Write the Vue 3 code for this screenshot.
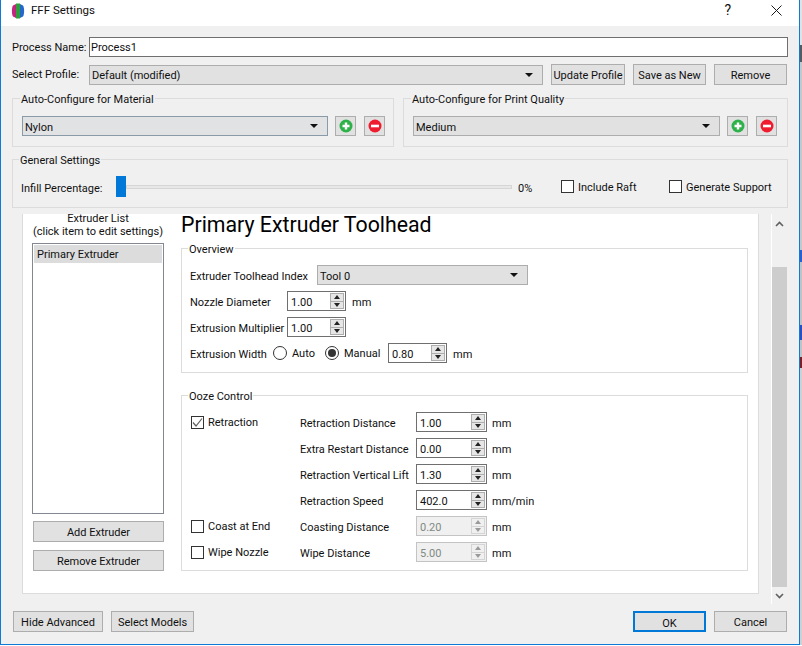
<template>
  <div class="screen">
    <div class="window">
      <!-- Title bar -->
      <header class="titlebar">
        <svg class="logo" width="16" height="16" viewBox="0 0 16 16">
          <path d="M3 2.500C1.500 5 1.500 11 3 13.500L6 15V1Z" fill="#c2267e" />
          <path d="M6 0.500H10V15.500H6Z" fill="#2f9e3f" />
          <path d="M10 1L13 2.500C14.500 5 14.500 11 13 13.500L10 15Z" fill="#2468c8" />
        </svg>
        <span class="title-text">FFF Settings</span>
        <span class="help">?</span>
        <svg class="close" width="11" height="11" viewBox="0 0 11 11">
          <path d="M0.500 0.500L10.500 10.500M10.500 0.500L0.500 10.500" stroke="#1a1a1a" fill="none" />
        </svg>
      </header>

      <div class="body">
        <div class="row name-row">
          <label class="top-label">Process Name:</label>
          <div class="text-input">Process1</div>
        </div>

        <div class="row profile-row">
          <label class="top-label">Select Profile:</label>
          <div class="combo profile-combo">
            <span>Default (modified)</span>
            <i class="caret"></i>
          </div>
          <button class="btn profile-btn update">Update Profile</button>
          <button class="btn profile-btn save">Save as New</button>
          <button class="btn profile-btn">Remove</button>
        </div>

        <div class="auto-row">
          <fieldset v-for="group in autoGroups" :key="group.title" class="group auto-group" :class="group.cls">
            <legend>{{ group.title }}</legend>
            <div class="combo-line">
              <div class="combo auto-combo" :class="{ hovered: group.hovered }">
                <span>{{ group.value }}</span>
                <i class="caret"></i>
              </div>
              <button class="icon-btn">
                <svg width="14" height="14" viewBox="0 0 14 14">
                  <circle cx="7" cy="7" r="6.500" fill="#2fb14a" />
                  <path d="M7 3.500V10.500M3.500 7H10.500" stroke="#fff" stroke-width="2.400" />
                </svg>
              </button>
              <button class="icon-btn">
                <svg width="14" height="14" viewBox="0 0 14 14">
                  <circle cx="7" cy="7" r="6.500" fill="#ee1c2e" />
                  <path d="M3 7H11" stroke="#fff" stroke-width="2.600" />
                </svg>
              </button>
            </div>
          </fieldset>
        </div>

        <fieldset class="group general">
          <legend>General Settings</legend>
          <div class="general-line">
            <span class="infill-label">Infill Percentage:</span>
            <div class="slider">
              <i class="slider-handle"></i>
              <i class="slider-track"></i>
            </div>
            <span class="percent">0%</span>
            <div class="check raft"><i class="box"></i><span>Include Raft</span></div>
            <div class="check support"><i class="box"></i><span>Generate Support</span></div>
          </div>
        </fieldset>

        <div class="scroll-row">
          <div class="panel">
            <!-- Extruder list column -->
            <div class="list-col">
              <div class="list-heading">Extruder List<br />(click item to edit settings)</div>
              <div class="list-box">
                <div class="list-item">Primary Extruder</div>
              </div>
              <button class="btn list-btn">Add Extruder</button>
              <button class="btn list-btn">Remove Extruder</button>
            </div>

            <!-- Settings column -->
            <div class="settings-col">
              <h1 class="heading">Primary Extruder Toolhead</h1>

              <fieldset class="group inner overview">
                <legend>Overview</legend>
                <div class="line">
                  <span class="w-index">Extruder Toolhead Index</span>
                  <div class="combo tool-combo">
                    <span>Tool 0</span>
                    <i class="caret"></i>
                  </div>
                </div>
                <div class="line">
                  <span class="w-field">Nozzle Diameter</span>
                  <div class="spin">
                    <span>1.00</span>
                    <div class="arrows"><i class="up"></i><i class="down"></i></div>
                  </div>
                  <span class="unit">mm</span>
                </div>
                <div class="line">
                  <span class="w-field">Extrusion Multiplier</span>
                  <div class="spin">
                    <span>1.00</span>
                    <div class="arrows"><i class="up"></i><i class="down"></i></div>
                  </div>
                </div>
                <div class="line width-line">
                  <span class="w-width">Extrusion Width</span>
                  <i class="radio"></i>
                  <span class="w-auto">Auto</span>
                  <i class="radio on"></i>
                  <span class="w-manual">Manual</span>
                  <div class="spin">
                    <span>0.80</span>
                    <div class="arrows"><i class="up"></i><i class="down"></i></div>
                  </div>
                  <span class="unit">mm</span>
                </div>
              </fieldset>

              <fieldset class="group inner ooze">
                <legend>Ooze Control</legend>
                <div class="ooze-grid">
                  <template v-for="item in oozeRows" :key="item.label">
                    <div class="check ooze-check">
                      <template v-if="item.check">
                        <i class="box">
                          <svg v-if="item.checked" width="11" height="11" viewBox="0 0 11 11">
                            <path d="M1 5.500L4 9L10 1.500" stroke="#5f5f5f" stroke-width="1.200" fill="none" />
                          </svg>
                        </i>{{ item.check }}
                      </template>
                    </div>
                    <span>{{ item.label }}</span>
                    <div class="spin wide" :class="{ disabled: item.disabled }">
                      <span>{{ item.value }}</span>
                      <div class="arrows"><i class="up"></i><i class="down"></i></div>
                    </div>
                    <span class="ooze-unit">{{ item.unit }}</span>
                  </template>
                </div>
              </fieldset>
            </div>
          </div>

          <!-- Scrollbar -->
          <div class="scrollbar">
            <svg class="sb-arrow" width="9" height="6" viewBox="0 0 9 6">
              <path d="M1 5L4.500 1.500L8 5" stroke="#606060" stroke-width="1.600" fill="none" />
            </svg>
            <div class="sb-thumb"></div>
            <svg class="sb-arrow" width="9" height="6" viewBox="0 0 9 6">
              <path d="M1 1L4.500 4.500L8 1" stroke="#606060" stroke-width="1.600" fill="none" />
            </svg>
          </div>
        </div>

        <footer class="footer">
          <button class="btn hide-btn">Hide Advanced</button>
          <button class="btn models-btn">Select Models</button>
          <button class="btn ok-btn">OK</button>
          <button class="btn cancel-btn">Cancel</button>
        </footer>
      </div>
    </div>
    <div class="desktop-edge"></div>
  </div>
</template>

<script setup>
const autoGroups = [
  { title: "Auto-Configure for Material", value: "Nylon", cls: "material", hovered: true },
  { title: "Auto-Configure for Print Quality", value: "Medium", cls: "quality", hovered: false },
];

const oozeRows = [
  { check: "Retraction", checked: true, label: "Retraction Distance", value: "1.00", unit: "mm" },
  { label: "Extra Restart Distance", value: "0.00", unit: "mm" },
  { label: "Retraction Vertical Lift", value: "1.30", unit: "mm" },
  { label: "Retraction Speed", value: "402.0", unit: "mm/min" },
  { check: "Coast at End", label: "Coasting Distance", value: "0.20", unit: "mm", disabled: true },
  { check: "Wipe Nozzle", label: "Wipe Distance", value: "5.00", unit: "mm", disabled: true },
];
</script>

<style>
html,
body {
  margin: 0;
  background: #fff;
}
</style>

<style scoped>
.screen {
  display: flex;
  width: 802px;
  height: 646px;
  overflow: hidden;
  font-family: Roboto, "Noto Sans", sans-serif;
  font-size: 11px;
  line-height: 17px;
  white-space: nowrap;
  color: #101010;
}

.window {
  box-sizing: border-box;
  width: 800px;
  height: 645px;
  border: solid #0f7ad8;
  border-width: 0 1px 1px 1px;
  background: #f0f0f0;
}

/* the desktop showing behind the dialog's right edge */
.desktop-edge {
  width: 2px;
  height: 645px;
  background: linear-gradient(
    #dfe3e6 0 45px,
    #555b60 45px 62px,
    #c4c8cb 62px 250px,
    #2a5fd0 250px 262px,
    #bfc3c6 262px 325px,
    #2a4fc0 325px 340px,
    #bfc3c6 340px 357px,
    #7a2028 357px 368px,
    #ced1d3 368px
  );
}

.titlebar {
  display: flex;
  align-items: center;
  box-sizing: border-box;
  height: 26px;
  background: #fff;
  padding: 0 0 5px 9px;
  font-size: 11.500px;
}

.logo {
  margin-right: 5px;
}

.title-text {
  flex: 1;
}

.help {
  margin-right: 40px;
  font-size: 14px;
}

.close {
  margin-right: 17px;
}

.body {
  padding: 11px 11px 0;
}

.row {
  display: flex;
  align-items: center;
}

.name-row {
  height: 20px;
  margin-bottom: 7px;
}

.profile-row {
  height: 21px;
  margin-bottom: 6px;
}

.top-label {
  width: 77px;
  flex: none;
}

.text-input {
  box-sizing: border-box;
  width: 699px;
  height: 20px;
  border: 1px solid #6f6f6f;
  background: #fff;
  padding-left: 1px;
  line-height: 19px;
}

.combo {
  box-sizing: border-box;
  display: flex;
  align-items: center;
  justify-content: space-between;
  height: 20px;
  border: 1px solid #adadad;
  background: #e1e1e1;
  padding: 0 9px 0 2px;
}

/* Segoe sits a pixel lower in its box than Roboto does */
.combo > span,
.spin > span,
.line > span,
.ooze-grid > span,
.check > span {
  padding-top: 2px;
}

.line > .w-auto,
.line > .w-manual {
  padding-top: 0;
}

.caret {
  width: 0;
  height: 0;
  border-left: 4px solid transparent;
  border-right: 4px solid transparent;
  border-top: 4px solid #111;
}

.profile-combo {
  width: 454px;
  margin-right: 8px;
}

.btn {
  box-sizing: border-box;
  height: 21px;
  border: 1px solid #adadad;
  background: #e1e1e1;
  padding: 2px 0 0;
  font: inherit;
  color: inherit;
}

.profile-btn {
  width: 73px;
}

.update {
  width: 74px;
  margin-right: 8px;
}

.save {
  margin-right: 8px;
}

.group {
  box-sizing: border-box;
  margin: 0;
  min-width: 0;
  border: 1px solid #dcdcdc;
}

.group legend {
  margin-left: -2px;
  padding: 0 1px;
  height: 15px;
  line-height: 17px;
}

.auto-row {
  display: flex;
  gap: 9px;
  margin-bottom: 5px;
}

.auto-group {
  height: 56px;
  padding: 10px 0 0 9px;
}

.material {
  width: 382px;
}

.quality {
  width: 385px;
}

.combo-line {
  display: flex;
  align-items: flex-start;
}

.auto-combo {
  width: 307px;
  margin-right: 7px;
}

.hovered {
  border-color: #8a9aa6;
  background: #e0e2e4;
}

.icon-btn {
  box-sizing: border-box;
  display: flex;
  align-items: center;
  justify-content: center;
  width: 21px;
  height: 20px;
  margin-right: 8px;
  border: 1px solid #adadad;
  background: #e1e1e1;
  padding: 0;
}

.general {
  height: 56px;
  padding: 9px 0 0 8px;
  margin-bottom: 6px;
}

.general-line {
  display: flex;
  align-items: center;
  height: 21px;
}

.infill-label {
  width: 95px;
  flex: none;
  padding-top: 4px;
}

.slider {
  display: flex;
  align-items: center;
  width: 396px;
  margin-right: 6px;
}

.slider-handle {
  width: 10px;
  height: 21px;
  background: #0078d7;
}

.slider-track {
  flex: 1;
  box-sizing: border-box;
  height: 4px;
  border: 1px solid #d6d6d6;
  background: #e7e7e7;
}

.percent {
  width: 43px;
  padding-top: 4px;
}

.check {
  display: flex;
  align-items: center;
}

.box {
  box-sizing: border-box;
  display: flex;
  align-items: center;
  justify-content: center;
  width: 13px;
  height: 13px;
  margin-right: 4px;
  border: 1px solid #333;
  background: #fff;
}

.raft {
  width: 108px;
}

.scroll-row {
  display: flex;
  align-items: flex-start;
  padding-left: 10px;
}

.panel {
  box-sizing: border-box;
  display: flex;
  gap: 17px;
  width: 737px;
  height: 380px;
  border: solid #dcdcdc;
  border-width: 0 1px 1px 1px;
  background: #fff;
  padding-left: 9px;
}

.list-col {
  width: 132px;
  flex: none;
}

.list-heading {
  margin-top: -2px;
  height: 31px;
  line-height: 13px;
  text-align: center;
}

.list-box {
  box-sizing: border-box;
  height: 271px;
  border: 1px solid #828790;
  padding: 1px;
  margin-bottom: 7px;
}

.list-item {
  height: 18px;
  padding-left: 3px;
  background: #dcdcdc;
  line-height: 19px;
}

.list-btn {
  display: block;
  width: 131px;
  margin: 0 0 8px 1px;
}

.settings-col {
  width: 567px;
  flex: none;
}

.heading {
  margin: 0;
  height: 27px;
  font-size: 21.300px;
  font-weight: 400;
  line-height: 22px;
  color: #000;
}

.inner {
  background: #fff;
  padding: 9px 0 0 8px;
}

.overview {
  height: 132px;
  margin-bottom: 15px;
}

.ooze {
  height: 183px;
}

.line {
  display: flex;
  align-items: center;
  height: 20px;
  margin-bottom: 6px;
}

.w-index {
  width: 127px;
}

.w-field {
  width: 97px;
}

.w-width {
  width: 83px;
}

.tool-combo {
  width: 211px;
}

.spin {
  box-sizing: border-box;
  display: flex;
  align-items: center;
  justify-content: space-between;
  width: 59px;
  height: 20px;
  border: 1px solid #6f6f6f;
  background: #fff;
  padding: 0 1px 0 3px;
}

.spin.wide {
  width: 71px;
}

.spin.disabled {
  border-color: #c4c4c4;
  background: #f0f0f0;
  color: #7f8a83;
}

.arrows {
  display: flex;
  flex-direction: column;
  gap: 1px;
  width: 14px;
  height: 16px;
  border: 1px solid #adadad;
  box-sizing: border-box;
  background: #adadad;
}

.arrows i {
  display: flex;
  align-items: center;
  justify-content: center;
  flex: 1;
  background: #e6e6e6;
}

.arrows i::after {
  content: "";
  width: 0;
  height: 0;
  border-left: 3px solid transparent;
  border-right: 3px solid transparent;
}

.arrows .up::after {
  border-bottom: 4px solid #222;
}

.arrows .down::after {
  border-top: 4px solid #222;
}

.disabled .arrows {
  border-color: #d4d4d4;
  background: #d4d4d4;
}

.disabled .arrows i {
  background: #f0f0f0;
}

.disabled .arrows .up::after {
  border-bottom-color: #9a9a9a;
}

.disabled .arrows .down::after {
  border-top-color: #9a9a9a;
}

.unit {
  margin-left: 6px;
}

.radio {
  box-sizing: border-box;
  display: flex;
  align-items: center;
  justify-content: center;
  width: 14px;
  height: 14px;
  border: 1px solid #333;
  border-radius: 50%;
  background: #fff;
}

.radio.on::after {
  content: "";
  width: 8px;
  height: 8px;
  border-radius: 50%;
  background: #333;
}

.w-auto {
  width: 33px;
  margin-left: 5px;
}

.w-manual {
  width: 44px;
  margin-left: 5px;
}

.ooze-grid {
  display: grid;
  grid-template-columns: 110px 116px 71px auto;
  grid-auto-rows: 20px;
  row-gap: 6px;
  align-items: center;
}

.ooze-unit {
  margin-left: 5px;
}

.ooze-check {
  padding-left: 1px;
}

.scrollbar {
  box-sizing: border-box;
  display: flex;
  flex-direction: column;
  align-items: center;
  width: 16px;
  height: 390px;
  margin-left: 12px;
  border-left: 1px solid #fff;
  padding-top: 7px;
}

.sb-thumb {
  width: 15px;
  height: 320px;
  margin: 40px 0 6px;
  background: #cdcdcd;
}

.footer {
  display: flex;
  margin-top: 7px;
  padding-left: 1px;
}

.hide-btn {
  width: 90px;
  margin-right: 8px;
}

.models-btn {
  width: 83px;
  margin-right: 439px;
}

.ok-btn {
  width: 73px;
  margin-right: 8px;
  border: 2px solid #0078d7;
}

.cancel-btn {
  width: 73px;
}
</style>
